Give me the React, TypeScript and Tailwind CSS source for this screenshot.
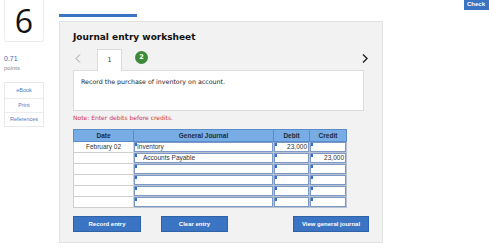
import React from "react";

const rows = [
  { date: "February 02", acct: "Inventory", indent: false, debit: "23,000", credit: "" },
  { date: "", acct: "Accounts Payable", indent: true, debit: "", credit: "23,000" },
  { date: "", acct: "", indent: false, debit: "", credit: "" },
  { date: "", acct: "", indent: false, debit: "", credit: "" },
  { date: "", acct: "", indent: false, debit: "", credit: "" },
  { date: "", acct: "", indent: false, debit: "", credit: "" },
];

function InputCell({ text, align, indent }: { text: string; align: "left" | "right"; indent?: boolean }) {
  return (
    <div className="relative h-[10px] border border-[#7b98c6] bg-white">
      <div className="absolute left-0 top-0 h-[3px] w-[2px] bg-[#2f6fd0]" />
      <div
        className={
          "leading-[8px] text-[6.5px] text-[#333] " +
          (align === "right" ? "text-right pr-[1px]" : indent ? "pl-[8px]" : "pl-[2px]")
        }
      >
        {text}
      </div>
    </div>
  );
}

export default function App() {
  return (
    <div className="w-[489px] h-[248px] overflow-hidden bg-white flex" style={{ fontFamily: "'DejaVu Sans', Verdana, sans-serif" }}>
      {/* Left column */}
      <div className="w-[59px] shrink-0 pl-[4px]">
        <div className="w-[40px] h-[42px] border border-t-0 border-[#ececec] rounded-b-[3px] flex items-center justify-center">
          <span className="text-[32px] leading-[36px] text-[#111]" style={{ fontFamily: "'Open Sans', sans-serif" }}>6</span>
        </div>
        <div className="mt-[13px] text-[7px] leading-[8px] text-[#3b6cb0]" style={{ fontFamily: "'Liberation Sans', Arial, sans-serif" }}>0.71</div>
        <div className="mt-[1px] text-[6px] leading-[8px] text-[#8a8a8a]" style={{ fontFamily: "'Liberation Sans', Arial, sans-serif" }}>points</div>
        <div className="mt-[10px] w-[40px] border border-[#e8e8e8] text-[5.5px] text-[#4a7dc0]" style={{ fontFamily: "'Liberation Sans', Arial, sans-serif" }}>
          <div className="h-[15px] flex items-center justify-center">eBook</div>
          <div className="h-[14px] flex items-center justify-center border-t border-[#ececec]">Print</div>
          <div className="h-[14px] flex items-center justify-center border-t border-[#ececec]">References</div>
        </div>
      </div>

      {/* Middle column */}
      <div className="w-[324px] shrink-0">
        <div className="mt-[14px] h-[3px] w-[78px] bg-[#3a74c2]" />
        <div className="mt-[4px] h-[222px] bg-[#f2f2f2] border border-[#e2e2e2] pl-[13px] pr-[18px] pt-[10px]">
          <div className="text-[9px] leading-[11px] font-bold text-[#111]">Journal entry worksheet</div>
          <div className="mt-[6px] h-[21px] flex items-start">
            <div className="w-[24px] h-[18px] flex items-center pl-[2px] text-[#999]">
              <svg width="6" height="9" viewBox="0 0 6 9"><path d="M5 0.5 L1 4.5 L5 8.5" stroke="#9a9a9a" strokeWidth="1" fill="none" /></svg>
            </div>
            <div className="w-[25px] h-[22px] bg-white border border-b-0 border-[#dcdcdc] flex items-center justify-center text-[6.5px] text-[#333] relative z-10">1</div>
            <div className="ml-[13px] mt-[2px] w-[13px] h-[13px] rounded-full bg-[#3d8a3b] flex items-center justify-center text-[6.5px] font-bold text-white">2</div>
            <div className="ml-auto mr-[-4px] h-[18px] flex items-center">
              <svg width="6" height="9" viewBox="0 0 6 9"><path d="M1 0.5 L5 4.5 L1 8.5" stroke="#222" strokeWidth="1.4" fill="none" /></svg>
            </div>
          </div>
          <div className="h-[41px] bg-white border border-[#dcdcdc] pl-[7px] pt-[7px] text-[6.3px] leading-[8px] text-[#222]">
            Record the purchase of inventory on account.
          </div>
          <div className="mt-[3px] text-[6px] leading-[8px] text-[#d0363a]">Note: Enter debits before credits.</div>
          <table className="mt-[7px] w-[273px] border-collapse table-fixed" style={{ fontFamily: "'Liberation Sans', Arial, sans-serif" }}>
            <colgroup>
              <col className="w-[60px]" />
              <col className="w-[140px]" />
              <col className="w-[36px]" />
              <col className="w-[37px]" />
            </colgroup>
            <thead>
              <tr className="h-[12px] bg-[#78ace4] text-[6.5px] font-bold text-[#1d2a3a]">
                <th className="border border-[#5a8ccb] font-bold p-0 leading-[10px]">Date</th>
                <th className="border border-[#5a8ccb] font-bold p-0 leading-[10px]">General Journal</th>
                <th className="border border-[#5a8ccb] font-bold p-0 leading-[10px]">Debit</th>
                <th className="border border-[#5a8ccb] font-bold p-0 leading-[10px]">Credit</th>
              </tr>
            </thead>
            <tbody>
              {rows.map((r, i) => (
                <tr key={i}>
                  <td className="border border-[#cfcfcf] bg-white text-center text-[6.5px] leading-[10px] text-[#333] p-0">{r.date}</td>
                  <td className="border border-[#b8c2d0] p-0"><InputCell text={r.acct} align="left" indent={r.indent} /></td>
                  <td className="border border-[#b8c2d0] p-0"><InputCell text={r.debit} align="right" /></td>
                  <td className="border border-[#b8c2d0] p-0"><InputCell text={r.credit} align="right" /></td>
                </tr>
              ))}
            </tbody>
          </table>
          <div className="mt-[8px] flex mr-[-5px]" style={{ fontFamily: "'Liberation Sans', Arial, sans-serif" }}>
            <button className="w-[68px] h-[16px] bg-[#3a74c2] border border-[#2f63a8] text-white text-[6px] font-bold">Record entry</button>
            <button className="ml-[20px] w-[67px] h-[16px] bg-[#3a74c2] border border-[#2f63a8] text-white text-[6px] font-bold">Clear entry</button>
            <button className="ml-auto w-[76px] h-[16px] bg-[#3a74c2] border border-[#2f63a8] text-white text-[6px] font-bold">View general journal</button>
          </div>
        </div>
      </div>

      {/* Right area */}
      <div className="flex-1 overflow-hidden">
        <div className="pl-[81px] flex">
          <div className="shrink-0 w-[34px] h-[10px] bg-[#3a74c2] text-white text-[6px] font-bold leading-[9px] pl-[3px]" style={{ fontFamily: "'Liberation Sans', Arial, sans-serif" }}>Check</div>
        </div>
      </div>
    </div>
  );
}
